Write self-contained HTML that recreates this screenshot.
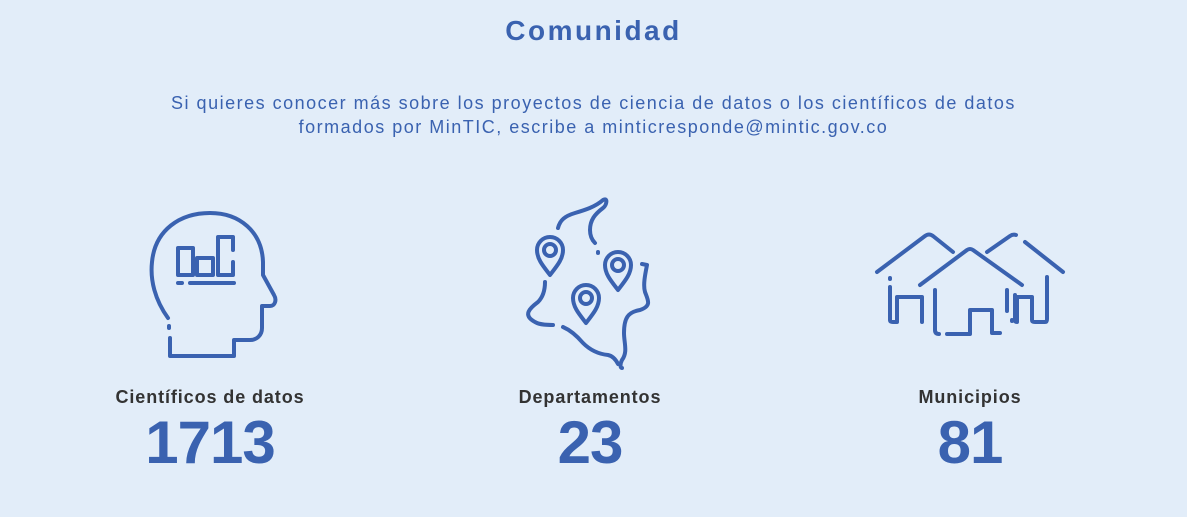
<!DOCTYPE html>
<html><head><meta charset="utf-8"><style>
html,body{margin:0;padding:0}
body{width:1187px;height:517px;background:#e2edf9;font-family:"Liberation Sans",sans-serif;position:relative;overflow:hidden}
.t{position:absolute;left:0;width:1187px;text-align:center;color:#3a62b0}
h1{position:absolute;left:0;width:1187px;text-align:center;margin:0;top:15px;font-size:28px;font-weight:bold;color:#3a62b0;letter-spacing:2.5px}
.p{top:91px;font-size:18px;line-height:24px;letter-spacing:1.5px}
.lab{position:absolute;width:300px;text-align:center;font-size:18px;font-weight:bold;color:#333;top:387px;letter-spacing:0.9px}
.num{position:absolute;width:300px;text-align:center;font-size:60px;font-weight:bold;color:#3a62b0;top:408px;letter-spacing:-1px}
svg{position:absolute;left:0;top:0}
</style></head><body>
<h1>Comunidad</h1>
<div class="t p">Si quieres conocer más sobre los proyectos de ciencia de datos o los científicos de datos<br>formados por MinTIC, escribe a minticresponde@mintic.gov.co</div>
<svg width="1187" height="517" fill="none" stroke="#3a62b0" stroke-width="4" stroke-linecap="round" stroke-linejoin="round">
<path d="M168,318 C155,300 150,280 152,262 C155,230 180,213 210,213 C240,213 262,232 263,262 L263,275 L274,295 C277,300 275,306 270,306 L262,306 L262,328 C262,335 257,340 250,340 L234,340 L234,356 L170,356 L170,338"/>
<path d="M169,326 L169,328"/>
<rect x="178" y="248" width="15" height="27"/>
<rect x="197" y="258" width="16" height="17"/>
<path d="M233,250 V237 H218 V275 H233 V262"/>
<path d="M178,283 H182 M190,283 H234"/>
<path d="M558,228 C560,220 565,216 575,213 C585,210 595,207 603,200 C608,197 607,205 603,208 C595,214 590,220 590,230 C590,236 592,240 595,243"/>
<path d="M598,252 L598,253"/>
<path d="M642,264 L647,265 C645,275 643,285 645,292 C648,300 652,306 640,310 C628,312 624,318 624,333 C624,343 628,352 622,360 C620,364 620,368 622,368"/>
<path d="M545,282 C545,290 543,297 538,302 C530,308 522,315 535,322 C540,325 548,325 553,325"/>
<path d="M563,327 C570,330 577,336 583,343 C590,350 598,354 608,355 C613,356 616,360 618,364"/>
<path d="M550,275 C543,266 537,259 537,250 A13,13 0 0 1 563,250 C563,259 557,266 550,275 Z"/>
<circle cx="550" cy="250" r="6"/>
<path d="M618,290 C611,281 605,274 605,265 A13,13 0 0 1 631,265 C631,274 625,281 618,290 Z"/>
<circle cx="618" cy="265" r="6"/>
<path d="M586,323 C579,314 573,307 573,298 A13,13 0 0 1 599,298 C599,307 593,314 586,323 Z"/>
<circle cx="586" cy="298" r="6"/>
<path d="M877,272 L925,236 Q929,233 933,236 L953,252"/>
<path d="M987,252 L1010,236 Q1013,234 1016,235"/>
<path d="M1025,242 L1063,272"/>
<path d="M920,285 L967,250 Q970,248 973,250 L1022,285"/>
<path d="M890,278 V279"/>
<path d="M890,287 V320 Q890,322 893,322 H897 V297 H922 V322"/>
<path d="M935,290 V330 Q935,334 939,334"/>
<path d="M947,334 H970 V310 H992 V333 H1000"/>
<path d="M1007,290 V311"/>
<path d="M1012,320 V321"/>
<path d="M1015,295 V320 Q1015,322 1017,322 V297 H1032 V320 Q1032,322 1035,322 H1045 Q1047,322 1047,319 V277"/>
</svg>
<div class="lab" style="left:60px">Científicos de datos</div>
<div class="num" style="left:60px">1713</div>
<div class="lab" style="left:440px">Departamentos</div>
<div class="num" style="left:440px">23</div>
<div class="lab" style="left:820px">Municipios</div>
<div class="num" style="left:820px">81</div>
</body></html>
